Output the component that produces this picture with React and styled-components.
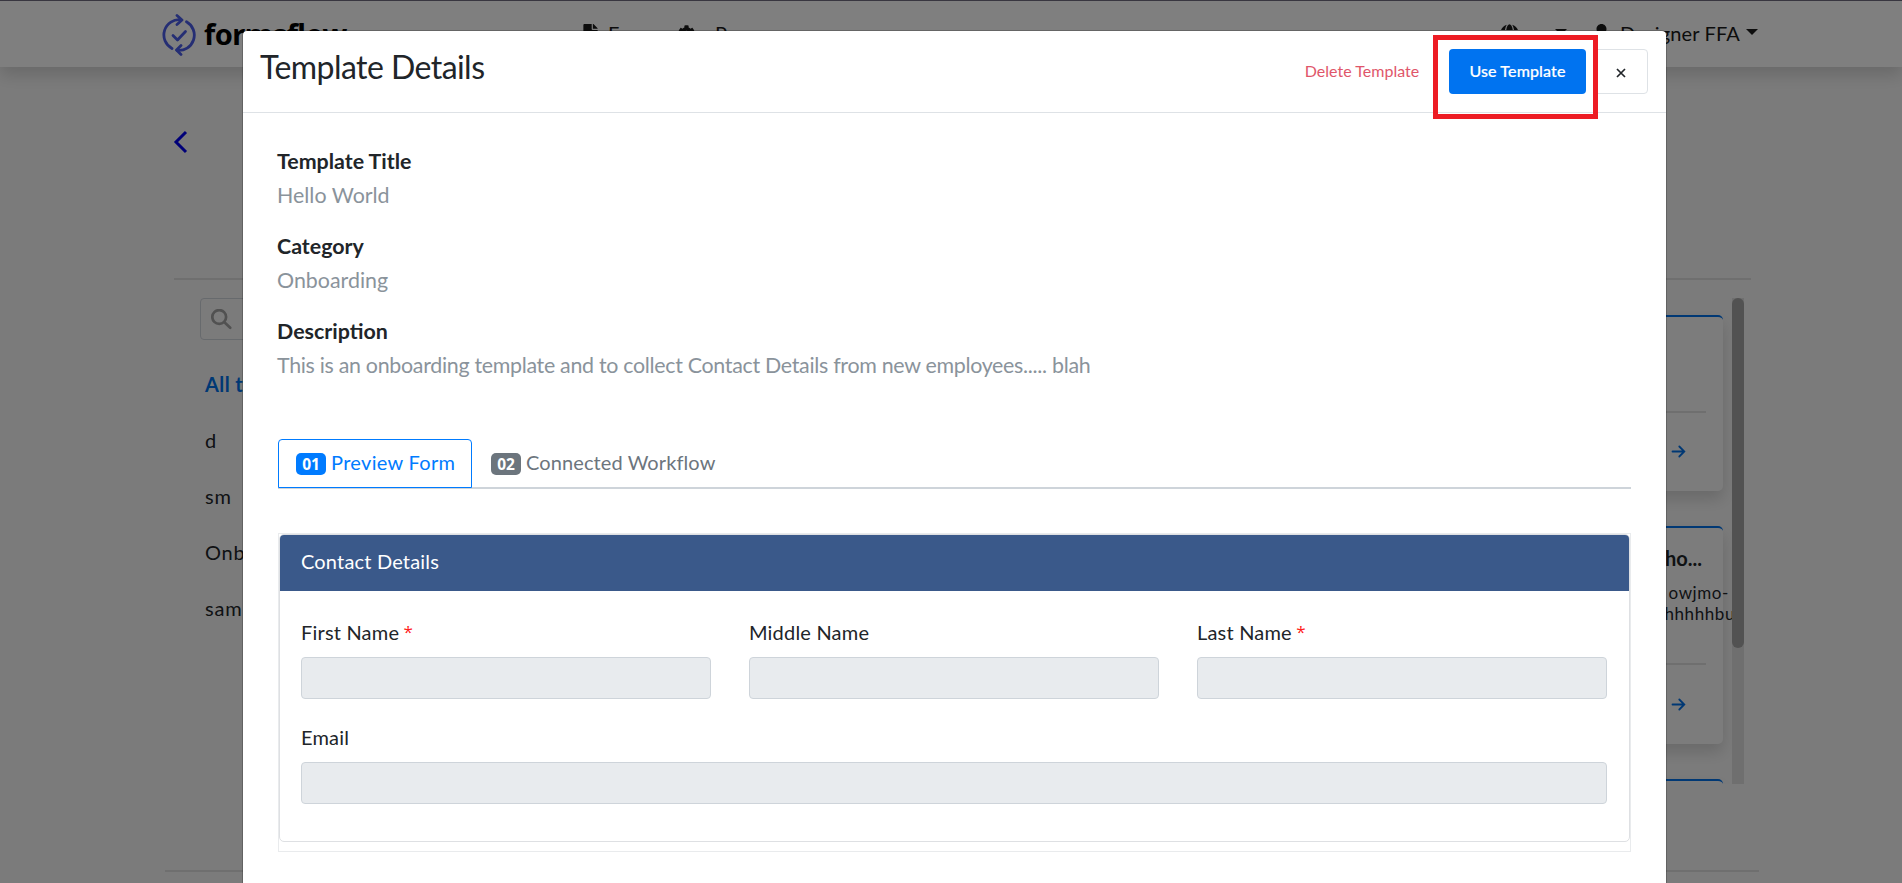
import React from "react";
import styled, { createGlobalStyle, css } from "styled-components";
import { FaFile, FaCog, FaGlobe, FaUser } from "react-icons/fa";

const Global = createGlobalStyle`
  * { box-sizing: border-box; }
  html, body { margin: 0; height: 883px; overflow: hidden; }
  body { background: #f7f7f7; color: #212529; font-family: Lato, "Open Sans", sans-serif; font-size: 20px; line-height: 1.5; }
`;

const Page = styled.div`
  position: relative;
  height: 883px;
  overflow: hidden;
  display: flex;
  flex-direction: column;
`;
const NavBar = styled.header`
  height: 67px;
  flex: none;
  display: flex;
  align-items: center;
  padding: 0 144px 1px 162px;
  border-top: 1px solid #706d80;
  background: #fff;
  box-shadow: 0 8px 16px rgba(0, 0, 0, 0.15);
`;
const Brand = styled.div`
  display: flex;
  align-items: center;
  gap: 8px;
  width: 419px;
  font: 700 29px/40px "Noto Sans", sans-serif;
  letter-spacing: -0.5px;
  color: #000;
`;
const LogoMark = styled.svg`
  width: 34px;
  height: 42px;
  margin-top: 3px;
`;
const NavItem = styled.div`
  display: flex;
  align-items: center;
  gap: ${(p) => p.$gap || 8}px;
  white-space: nowrap;
  width: ${(p) => p.$w}px;
  color: #1a1a1a;
  letter-spacing: 0.15px;
`;
const NavText = styled.span`
  margin-top: -2px;
`;
const Spacer = styled.div`flex: 1;`;
const Caret = styled.span`
  border: 6px solid transparent;
  border-top-color: #1a1a1a;
  border-bottom: 0;
  margin-left: ${(p) => p.$ml || 0}px;
  margin-bottom: 3px;
`;
const Content = styled.main`
  flex: 1;
  display: flex;
  flex-direction: column;
  padding: 62px 143px 0 165px;
`;
const BackIcon = styled.svg`
  display: block;
  margin-left: 7px;
  width: 17px;
  height: 26px;
`;
const Rule = styled.div`
  height: 2px;
  flex: none;
  background: #dedede;
  margin: ${(p) => p.$m};
`;
const Columns = styled.div`
  display: flex;
  justify-content: space-between;
  height: 486px;
  margin: 18px 15px 0 35px;
`;
const Sidebar = styled.div`
  display: flex;
  flex-direction: column;
  width: 240px;
`;
const SearchBox = styled.div`
  display: flex;
  align-items: center;
  height: 42px;
  padding-left: 10px;
  margin-bottom: 16px;
  border: 1px solid #ced4da;
  border-radius: 4px;
`;
const SearchIcon = styled.svg`
  width: 21px;
  height: 21px;
`;
const Category = styled.div`
  height: 56px;
  padding-left: 5px;
  line-height: 54px;
  color: #212529;
  letter-spacing: 0.8px;
  ${(p) => p.$active && css`color: #0070e8; font-weight: 700; height: 57px; line-height: 56px; letter-spacing: 0.4px;`}
`;
const Listing = styled.div`
  display: flex;
  height: 486px;
  overflow: hidden;
`;
const Cards = styled.div`
  width: 240px;
  overflow: hidden;
  padding: 17px 9px 0 0;
`;
const Card = styled.article`
  display: flex;
  flex-direction: column;
  height: ${(p) => p.$h}px;
  margin-bottom: 35px;
  padding: 17px 17px 0 0;
  border-top: 2px solid #0070e8;
  border-radius: 5px;
  background: #f9f9f9;
  box-shadow: 0 8px 16px rgba(0, 0, 0, 0.15);
`;
const CardTitle = styled.div`
  height: 37px;
  text-align: right;
  font-weight: 700;
  line-height: 26px;
  margin-right: 4px;
`;
const CardText = styled.div`
  height: 42px;
  margin-right: ${(p) => p.$mr}px;
  text-align: right;
  font-size: 17px;
  line-height: 21px;
  letter-spacing: 0.6px;
  white-space: nowrap;
`;
const Line = styled.div`margin-right: ${(p) => p.$mr}px;`;
const CardArrow = styled.svg`
  align-self: flex-end;
  flex: none;
  width: 15px;
  height: 13px;
  margin: ${(p) => p.$mt}px 20px 0 0;
`;
const Track = styled.div`
  width: 12px;
  background: #dedede;
`;
const Thumb = styled.div`
  height: 350px;
  border-radius: 6px;
  background: #a4a4a4;
`;
const Backdrop = styled.div`
  position: absolute;
  inset: 0;
  background: rgba(0, 0, 0, 0.5);
`;
const Modal = styled.section`
  position: absolute;
  top: 30px;
  left: 242px;
  width: 1425px;
  height: 1000px;
  background: #fff;
  background-clip: padding-box;
  border: 1px solid rgba(0, 0, 0, 0.2);
  border-radius: 5px;
`;
const ModalHeader = styled.div`
  display: flex;
  height: 82px;
  padding: 18px 18px 0 17px;
  border-bottom: 1px solid #dee2e6;
`;
const ModalTitle = styled.h1`
  flex: 1;
  margin: 0;
  font-size: 32px;
  font-weight: 400;
  line-height: 36px;
  letter-spacing: -0.55px;
`;
const Button = styled.button`
  height: 45px;
  padding: 0 0 2px;
  border: 1px solid transparent;
  border-radius: 4px;
  background: transparent;
  font: 400 16px Lato, sans-serif;
  letter-spacing: 0.02px;
  color: #212529;
  ${(p) => p.$kind === "danger" && css`width: 144px; margin-right: 15px; color: #e0566a;`}
  ${(p) => p.$kind === "primary" && css`width: 137px; background: #0073f0; color: #fff; font-weight: 500; letter-spacing: 0.12px; -webkit-text-stroke: 0.2px #fff;`}
  ${(p) => p.$kind === "close" && css`width: 54px; margin-left: 8px; padding: 0; border-color: #dee2e6;`}
`;
const Highlight = styled.div`
  position: absolute;
  top: 4px;
  left: 1190px;
  width: 165px;
  height: 84px;
  border: 5px solid #ed1c24;
`;
const ModalBody = styled.div`padding: 31px 35px 0;`;
const Detail = styled.div`
  height: 85px;
  line-height: 34px;
  font-size: 21.4px;
  margin-left: -1px;
`;
const Label = styled.div`font-weight: 700;`;
const Value = styled.div`
  color: #8a939b;
  letter-spacing: ${(p) => (p.$long ? -0.3 : 0)}px;
`;
const Tabs = styled.div`
  display: flex;
  height: 50px;
  margin-top: 40px;
  border-bottom: 2px solid #ced4da;
`;
const Tab = styled.div`
  display: flex;
  align-items: center;
  gap: 5px;
  height: 49px;
  padding: 0 17px 3px;
  border: 1px solid transparent;
  border-radius: 4px 4px 0 0;
  letter-spacing: 0.1px;
  color: #6c757d;
  white-space: nowrap;
  ${(p) => p.$active && css`width: 194px; margin-right: 1px; letter-spacing: 0.32px; border-color: #007bff; color: #007bff;`}
`;
const Badge = styled.span`
  flex: none;
  width: 30px;
  height: 22px;
  margin-top: 4px;
  border-radius: 5px;
  background: ${(p) => p.$bg};
  color: #fff;
  font: 700 15.5px/22px "Open Sans", sans-serif;
  letter-spacing: 0;
  text-align: center;
`;
const FormFrame = styled.div`
  height: 319px;
  margin-top: 44px;
  border: 1px solid #e9ebed;
`;
const Panel = styled.div`
  height: 308px;
  border: 1px solid #dee0e3;
  border-radius: 5px;
  overflow: hidden;
`;
const PanelTitle = styled.div`
  height: 56px;
  padding-left: 21px;
  background: #3a598a;
  color: #fff;
  line-height: 53px;
  letter-spacing: 0.18px;
`;
const Fields = styled.div`
  display: grid;
  grid-template-columns: repeat(3, 410px);
  column-gap: 38px;
  row-gap: 21px;
  padding: 24px 21px;
`;
const Field = styled.label`
  display: block;
  grid-column: ${(p) => (p.$wide ? "1 / -1" : "auto")};
`;
const FieldName = styled.div`
  height: 42px;
  line-height: 35px;
  letter-spacing: 0.2px;
`;
const Star = styled.span`
  position: relative;
  top: -2px;
  left: -1px;
  color: #ff1a1a;
  font-family: "Open Sans", sans-serif;
  font-size: 17px;
  line-height: 20px;
`;
const Input = styled.div`
  height: 42px;
  border: 1px solid #ced4da;
  border-radius: 4px;
  background: #e8ebee;
`;

const Logo = () => (
  <LogoMark viewBox="0 0 34 42" fill="none" stroke="#4a5de8" strokeWidth="2.8" strokeLinecap="round" strokeLinejoin="round">
    <path d="M10 34.5A15.3 15.3 0 0 1 19 5.8" />
    <path d="M15 1.5L20 6L15 10.5" />
    <path d="M24.5 7.8A15.3 15.3 0 0 1 15 36.3" />
    <path d="M19 31.5L14.5 36L19 40.5" />
    <path d="M11 21.5L15.5 26L23.5 17.5" />
  </LogoMark>
);
const Arrow = ({ mt }) => (
  <CardArrow $mt={mt} viewBox="0 0 15 13" fill="none" stroke="#0070e8" strokeWidth="1.8" strokeLinecap="round">
    <path d="M1.5 6.5H13M8.3 1.5L13.3 6.5L8.3 11.5" />
  </CardArrow>
);

const fields = [
  { name: "First Name", required: true },
  { name: "Middle Name" },
  { name: "Last Name", required: true },
  { name: "Email", wide: true },
];
const details = [
  ["Template Title", "Hello World"],
  ["Category", "Onboarding"],
  ["Description", "This is an onboarding template and to collect Contact Details from new employees..... blah"],
];

export default function App() {
  return (
    <Page>
      <Global />
      <NavBar>
        <Brand><Logo />formsflow</Brand>
        <NavItem $w={97}><FaFile size={19} /><NavText>Forms</NavText></NavItem>
        <NavItem $w={160} $gap={20}><FaCog size={17} /><NavText>Processes</NavText></NavItem>
        <Spacer />
        <NavItem $w={92}><FaGlobe size={19} /><Caret $ml={28} /></NavItem>
        <NavItem $w={166} $gap={9}><FaUser size={20} /><NavText>Designer FFA</NavText><Caret $ml={-3} /></NavItem>
      </NavBar>
      <Content>
        <BackIcon viewBox="0 0 17 26" fill="none" stroke="#0000f0" strokeWidth="3">
          <path d="M14 3L4 13L14 23" />
        </BackIcon>
        <Rule $m="123px 8px 0 9px" />
        <Columns>
          <Sidebar>
            <SearchBox>
              <SearchIcon viewBox="0 0 21 21" fill="none" stroke="#a2a2a2" strokeWidth="2.7" strokeLinecap="round">
                <circle cx="8.2" cy="8" r="6.9" />
                <path d="M13.4 13.2L19.2 18.8" />
              </SearchIcon>
            </SearchBox>
            <Category $active>All templates</Category>
            <Category>d</Category>
            <Category>sm</Category>
            <Category>Onboarding</Category>
            <Category>sample</Category>
          </Sidebar>
          <Listing>
            <Cards>
              <Card $h={176}>
                <CardTitle /><CardText $mr={0} />
                <Rule $m="-2px 0 0" />
                <Arrow mt={32} />
              </Card>
              <Card $h={218}>
                <CardTitle>echo...</CardTitle>
                <CardText $mr={-26}><Line $mr={3}>owjmo-</Line><Line $mr={-11}>hhhhhhbus</Line></CardText>
                <Rule $m="39px 0 0" />
                <Arrow mt={33} />
              </Card>
              <Card $h={200} />
            </Cards>
            <Track><Thumb /></Track>
          </Listing>
        </Columns>
        <Rule $m="86px 0 0" />
      </Content>
      <Backdrop />
      <Modal>
        <ModalHeader>
          <ModalTitle>Template Details</ModalTitle>
          <Button $kind="danger">Delete Template</Button>
          <Button $kind="primary">Use Template</Button>
          <Button $kind="close" aria-label="Close">
            <svg width="10" height="10" viewBox="0 0 10 10" stroke="#212529" strokeWidth="1.7">
              <path d="M1 1L9 9M9 1L1 9" />
            </svg>
          </Button>
        </ModalHeader>
        <Highlight />
        <ModalBody>
          {details.map(([label, value]) => (
            <Detail key={label}><Label>{label}</Label><Value $long={value.length > 40}>{value}</Value></Detail>
          ))}
          <Tabs>
            <Tab $active><Badge $bg="#007bff">01</Badge>Preview Form</Tab>
            <Tab><Badge $bg="#6c757d">02</Badge>Connected Workflow</Tab>
          </Tabs>
          <FormFrame>
            <Panel>
              <PanelTitle>Contact Details</PanelTitle>
              <Fields>
                {fields.map((f) => (
                  <Field key={f.name} $wide={f.wide}>
                    <FieldName>{f.name} {f.required && <Star>*</Star>}</FieldName>
                    <Input />
                  </Field>
                ))}
              </Fields>
            </Panel>
          </FormFrame>
        </ModalBody>
      </Modal>
    </Page>
  );
}
